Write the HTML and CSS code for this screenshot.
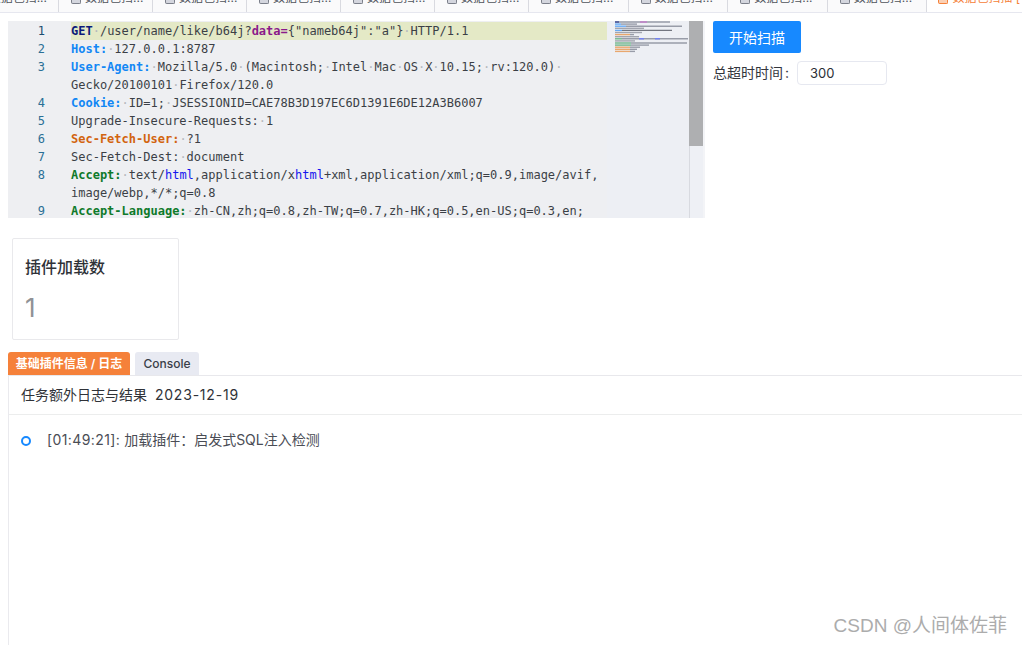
FILE: index.html
```html
<!DOCTYPE html>
<html lang="zh">
<head>
<meta charset="utf-8">
<title>数据包扫描</title>
<link rel="stylesheet" href="styles.css">
</head>
<body>
<div class="tabs">
  <div class="tab tab-first"><span class="tab-label">数据包扫...</span></div>
  <div class="tab"><span class="doc"></span><span class="tab-label">数据包扫...</span></div>
  <div class="tab"><span class="doc"></span><span class="tab-label">数据包扫...</span></div>
  <div class="tab"><span class="doc"></span><span class="tab-label">数据包扫...</span></div>
  <div class="tab"><span class="doc"></span><span class="tab-label">数据包扫...</span></div>
  <div class="tab"><span class="doc"></span><span class="tab-label">数据包扫...</span></div>
  <div class="tab tab-wide"><span class="doc"></span><span class="tab-label">数据包扫...</span></div>
  <div class="tab tab-wide"><span class="doc"></span><span class="tab-label">数据包扫...</span></div>
  <div class="tab tab-wide"><span class="doc"></span><span class="tab-label">数据包扫...</span></div>
  <div class="tab tab-wide"><span class="doc"></span><span class="tab-label">数据包扫...</span></div>
  <div class="tab tab-active"><span class="doc"></span><span class="tab-label">数据包扫描 [</span></div>
</div>
<div class="top">
  <div class="editor">
    <div class="code">
      <div class="line current"><span class="n">1</span><span class="t"><b class="navy">GET</b><i>·</i>/user/name/like/b64j?<b class="purple">data=</b>{"nameb64j":"a"}<i>·</i>HTTP/1.1</span></div>
      <div class="line"><span class="n">2</span><span class="t"><b class="blue">Host:</b><i>·</i>127.0.0.1:8787</span></div>
      <div class="line"><span class="n">3</span><span class="t"><b class="blue">User-Agent:</b><i>·</i>Mozilla/5.0<i>·</i>(Macintosh;<i>·</i>Intel<i>·</i>Mac<i>·</i>OS<i>·</i>X<i>·</i>10.15;<i>·</i>rv:120.0)<i>·</i></span></div>
      <div class="line"><span class="n"></span><span class="t">Gecko/20100101<i>·</i>Firefox/120.0</span></div>
      <div class="line"><span class="n">4</span><span class="t"><b class="blue">Cookie:</b><i>·</i>ID=1;<i>·</i>JSESSIONID=CAE78B3D197EC6D1391E6DE12A3B6007</span></div>
      <div class="line"><span class="n">5</span><span class="t">Upgrade-Insecure-Requests:<i>·</i>1</span></div>
      <div class="line"><span class="n">6</span><span class="t"><b class="orange">Sec-Fetch-User:</b><i>·</i>?1</span></div>
      <div class="line"><span class="n">7</span><span class="t">Sec-Fetch-Dest:<i>·</i>document</span></div>
      <div class="line"><span class="n">8</span><span class="t"><b class="green">Accept:</b><i>·</i>text/<span class="link">html</span>,application/x<span class="link">html</span>+xml,application/xml;q=0.9,image/avif,</span></div>
      <div class="line"><span class="n"></span><span class="t">image/webp,*/*;q=0.8</span></div>
      <div class="line"><span class="n">9</span><span class="t"><b class="green">Accept-Language:</b><i>·</i>zh-CN,zh;q=0.8,zh-TW;q=0.7,zh-HK;q=0.5,en-US;q=0.3,en;</span></div>
    </div>
    <div class="minimap">
      <svg class="minimap-svg" width="74" height="33" viewBox="0 0 74 33" aria-hidden="true">
        <g stroke-width="1.4" fill="none">
          <path stroke="#8f94a0" d="M0 1h55"/><path stroke="#2a3a90" d="M0 1h4"/><path stroke="#c070c8" d="M25 1h7"/>
          <path stroke="#8f94a0" d="M6 3.1h16"/><path stroke="#5aa4f5" d="M0 3.1h6"/>
          <path stroke="#8f94a0" d="M11 5.2h56"/><path stroke="#5aa4f5" d="M0 5.2h11"/>
          <path stroke="#9a9ea8" d="M0 7.3h29"/>
          <path stroke="#666a74" d="M7 9.4h50"/><path stroke="#5aa4f5" d="M0 9.4h7"/>
          <path stroke="#9a9ea8" d="M0 11.5h27"/>
          <path stroke="#8f94a0" d="M15 13.6h4"/><path stroke="#e8a060" d="M0 13.6h15"/>
          <path stroke="#9a9ea8" d="M0 15.7h24"/>
          <path stroke="#8f94a0" d="M7 17.8h66"/><path stroke="#62b080" d="M0 17.8h7"/><path stroke="#6878f0" d="M24 17.8h5M40 17.8h5"/>
          <path stroke="#9a9ea8" d="M0 19.9h20"/>
          <path stroke="#8f94a0" d="M16 22h56"/><path stroke="#62b080" d="M0 22h16"/>
          <path stroke="#8f94a0" d="M16 24.1h18"/><path stroke="#62b080" d="M0 24.1h16"/>
          <path stroke="#8f94a0" d="M15 26.2h10"/><path stroke="#e8a060" d="M0 26.2h15"/>
          <path stroke="#8f94a0" d="M15 28.3h7"/><path stroke="#e8a060" d="M0 28.3h15"/>
          <path stroke="#8f94a0" d="M15 30.4h5"/><path stroke="#e8a060" d="M0 30.4h15"/>
        </g>
      </svg>
    </div>
    <div class="scrollbar"><div class="thumb"></div></div>
  </div>
  <div class="controls">
    <button class="scan" type="button">开始扫描</button>
    <div class="timeout">
      <label class="timeout-label">总超时时间<span class="colon">:</span></label>
      <div class="timeout-input">300</div>
    </div>
  </div>
</div>
<div class="stat">
  <div class="stat-title">插件加载数</div>
  <div class="stat-value">1</div>
</div>
<div class="panel-tabs">
  <div class="ptab ptab-on">基础插件信息 / 日志</div>
  <div class="ptab">Console</div>
</div>
<div class="panel">
  <div class="panel-head">任务额外日志与结果&nbsp;&nbsp;<span class="date">2023-12-19</span></div>
  <div class="panel-body">
    <div class="log"><span class="dot"></span><span class="log-text"><span class="stamp">[01:49:21]:</span> 加载插件：启发式SQL注入检测</span></div>
  </div>
</div>
<div class="watermark">CSDN @人间体佐菲</div>
</body>
</html>
```
FILE: styles.css
```css
* { box-sizing: border-box; }
html, body { margin: 0; padding: 0; }
body {
  width: 1022px;
  height: 645px;
  overflow: hidden;
  background: #fff;
  color: #2b2f36;
  font-family: Inter, "Noto Sans CJK SC", sans-serif;
  font-size: 13px;
  position: relative;
}
.tabs {
  display: flex;
  height: 13px;
  background: #fafafb;
  border-bottom: 1px solid #e6e7ef;
  overflow: hidden;
}
.tab {
  width: 94px;
  height: 12px;
  flex: none;
  display: flex;
  align-items: flex-start;
  gap: 4px;
  padding: 0 0 0 12px;
  border-right: 1px solid #d9dae0;
  color: #50545c;
  font-size: 12px;
}
.tab-first { width: 59px; padding: 0 11px 0 0; justify-content: flex-end; }
.tab-wide { width: 99.6px; }
.tab-active {
  flex: 1;
  height: 13px;
  background: #fff;
  border-right: 0;
  color: #f5813a;
  padding-left: 11px;
}
.tab-label { display: block; flex: none; white-space: nowrap; line-height: 14px; margin-top: -9px; }
.doc {
  width: 10px;
  height: 4px;
  flex: none;
  border: 1.5px solid #7b7f8a;
  border-top: 0;
  border-radius: 0 0 2px 2px;
  background: #d4d6de;
}
.tab-active .doc { border-color: #f5813a; background: #fbd0b4; }
.top {
  display: flex;
  align-items: flex-start;
  padding: 8px 0 0 8px;
}
.editor {
  width: 697px;
  height: 197px;
  display: flex;
  background: #eeeff2;
  overflow: hidden;
  flex: none;
  border-right: 2px solid #f3f4f7;
}
.code {
  width: 599px;
  flex: none;
  padding-top: 1px;
  font-family: "DejaVu Sans Mono", monospace;
  font-size: 12px;
  color: #3b3f46;
  overflow: hidden;
}
.line { display: flex; height: 18px; line-height: 18px; white-space: pre; }
.current .t { background: #e4e9c6; width: 536px; }
.n { width: 63px; flex: none; padding-right: 26px; text-align: right; color: #2a6f96; }
.current .n { color: #1d4d70; }
.t { flex: none; }
.t i { font-style: normal; color: #b5b8bd; }
.t b { font-weight: 700; }
.navy { color: #0b1a7a; }
.purple { color: #8a1a8a; }
.blue { color: #1287f5; }
.orange { color: #d2640f; }
.green { color: #0f7a2a; }
.link { color: #1515ee; }
.minimap {
  width: 82px;
  flex: none;
  background: #edeff4;
  padding: 0 0 0 8px;
  overflow: hidden;
}
.minimap-svg { display: block; filter: blur(0.35px); opacity: 0.9; }
.scrollbar {
  width: 14px;
  flex: none;
  background: #eef0f5;
  box-shadow: inset 1px 0 #d8dae0;
}
.thumb { height: 125px; background: #aeafb1; }
.controls { margin-left: 8px; display: flex; flex-direction: column; align-items: flex-start; gap: 8px; }
.scan {
  width: 88px;
  height: 32px;
  border: 0;
  border-radius: 2px;
  background: #1789ff;
  color: #fff;
  font-family: Inter, "Noto Sans CJK SC", sans-serif;
  font-size: 14px;
  padding: 0;
}
.timeout { display: flex; align-items: center; height: 24px; }
.timeout-label { font-size: 14px; white-space: nowrap; color: #33363d; line-height: 24px; }
.colon { margin: 0 8px 0 2px; }
.timeout-input {
  width: 90px;
  height: 24px;
  border: 1px solid #e6e8f0;
  border-radius: 4px;
  padding-left: 12px;
  line-height: 22px;
  font-size: 13px;
}
.stat {
  margin: 20px 0 0 12px;
  width: 167px;
  height: 102px;
  border: 1px solid #e9e9ec;
  border-radius: 2px;
  padding: 17px 12px 0;
}
.stat-title { font-size: 16px; line-height: 22px; font-weight: 500; color: #2f3238; }
.stat-value { margin-top: 14px; font-size: 26px; line-height: 32px; color: #909296; font-weight: 400; }
.panel-tabs { display: flex; gap: 5px; margin: 12px 0 0 8px; height: 23px; }
.ptab {
  height: 23px;
  width: 64px;
  text-align: center;
  line-height: 24px;
  font-size: 12px;
  font-weight: 500;
  background: #e8eaf2;
  color: #3a3e48;
  border-radius: 3px 3px 0 0;
}
.ptab-on { width: 122px; font-weight: 600; background: #f5813a; color: #fff; }
.panel {
  margin-left: 8px;
  height: 270px;
  border-left: 1px solid #eaeaee;
  border-top: 1px solid #e8e8ec;
}
.panel-head {
  height: 39px;
  padding-left: 12px;
  line-height: 38px;
  font-size: 14px;
  color: #2f3238;
  border-bottom: 1px solid #eceded;
}
.date { letter-spacing: 0.8px; }
.panel-body { padding-top: 16px; }
.log { display: flex; align-items: center; gap: 16px; padding-left: 12px; height: 20px; font-size: 14px; color: #4a4d55; }
.log-text { margin-top: -2px; line-height: 20px; white-space: nowrap; }
.stamp { letter-spacing: 0.4px; }
.dot {
  width: 10px;
  height: 10px;
  flex: none;
  border: 2.5px solid #1789ff;
  border-radius: 50%;
  background: #fff;
}
.watermark {
  position: absolute;
  right: 15px;
  bottom: 6px;
  font-family: "Liberation Sans", "Noto Sans CJK SC", sans-serif;
  font-size: 19px;
  line-height: 26px;
  color: #acacac;
  white-space: nowrap;
}
```
